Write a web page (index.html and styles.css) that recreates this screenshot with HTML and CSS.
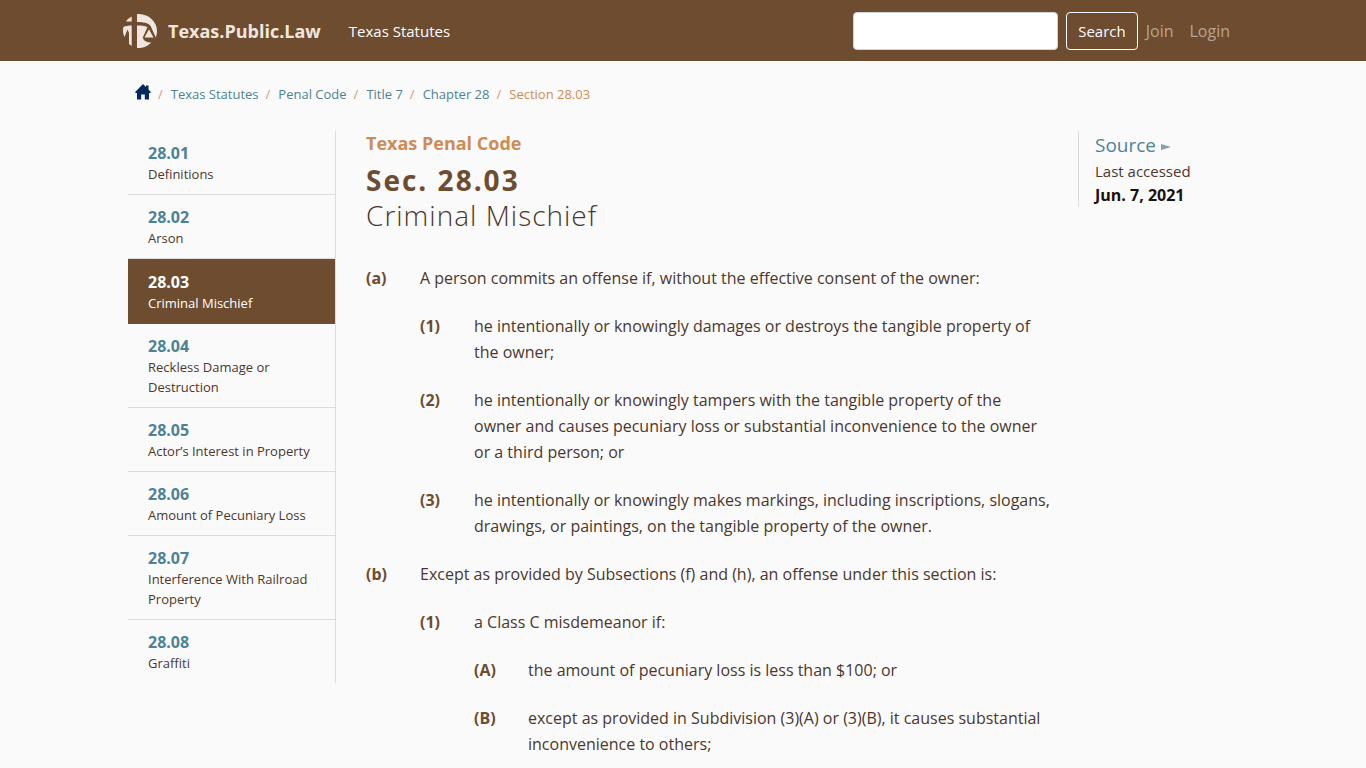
FILE: index.html
```html
<!DOCTYPE html>
<html lang="en">

<head>
  <meta charset="UTF-8">
  <title>Texas Penal Code Section 28.03 - Criminal Mischief</title>
  <meta name="viewport" content="width=device-width, initial-scale=1.0">
  <link rel="stylesheet" href="styles.css">
</head>

<body>

  <!-- Navbar -->
  <header class="navbar">
    <div class="container navbar-inner">
      <a class="brand" href="#">
        <svg class="brand-logo" viewBox="0 0 34 34" aria-hidden="true">
          <path d="M8.700 2.500V7.600H2.800A17 17 0 0 1 8.700 2.500Z" />
          <path d="M14 0C25 -.500 34 7 34 17C34 19.500 33.500 21.500 32.800 23.500L28.500 14C27.500 10 23 8 14 8Z" />
          <path d="M.3 13C3 12 5.500 11.500 8.700 11.500V32L6 30V19L4.500 15.500L1.500 23C0 20 -.300 16.500 .3 13Z" />
          <path d="M14 11.500C18 11.500 21.500 11.800 24.500 13L19.800 23.500C20 26.500 24 28.500 28.500 28.500C24 33 19 34.500 14 33.900Z" />
          <path d="M26 15.300L30.500 23.500H21.500Z" />
        </svg>
        <span>Texas.Public.Law</span>
      </a>
      <nav class="nav-main">
        <a href="#">Texas Statutes</a>
      </nav>
      <form class="search">
        <input type="search" name="term" aria-label="Search">
        <button type="submit">Search</button>
      </form>
      <nav class="nav-user">
        <a href="#">Join</a>
        <a href="#">Login</a>
      </nav>
    </div>
  </header>

  <div class="container">

    <!-- Breadcrumbs -->
    <ol class="breadcrumb">
      <li>
        <a href="#" aria-label="Home">
          <svg class="home-icon" viewBox="0 0 16 16" aria-hidden="true">
            <path d="M8 0L11 3V1.500H13.500V5.500L16 8.200L15.300 9H14V15.500H9.800V10.500H6.200V15.500H2V9H.7L0 8.200Z" />
          </svg>
        </a>
      </li>
      <li><a href="#">Texas Statutes</a></li>
      <li><a href="#">Penal Code</a></li>
      <li><a href="#">Title 7</a></li>
      <li><a href="#">Chapter 28</a></li>
      <li class="active">Section 28.03</li>
    </ol>

    <div class="layout">

      <!-- Sibling sections -->
      <nav class="siblings">
        <a href="#"><b>28.01</b><span>Definitions</span></a>
        <a href="#"><b>28.02</b><span>Arson</span></a>
        <a href="#" class="active"><b>28.03</b><span>Criminal Mischief</span></a>
        <a href="#"><b>28.04</b><span>Reckless Damage or Destruction</span></a>
        <a href="#"><b>28.05</b><span>Actor’s Interest in Property</span></a>
        <a href="#"><b>28.06</b><span>Amount of Pecuniary Loss</span></a>
        <a href="#"><b>28.07</b><span>Interference With Railroad Property</span></a>
        <a href="#"><b>28.08</b><span>Graffiti</span></a>
      </nav>

      <!-- Statute text -->
      <main class="statute">
        <div class="code-name">Texas Penal Code</div>
        <h1>
          <span class="number">Sec. 28.03</span>
          <span class="name">Criminal Mischief</span>
        </h1>

        <div class="leaf-list">
          <section>
            <b>(a)</b>
            <p>A person commits an offense if, without the effective consent of the owner:</p>
          </section>
          <section class="level-1">
            <b>(1)</b>
            <p>he intentionally or knowingly damages or destroys the tangible property of the owner;</p>
          </section>
          <section class="level-1">
            <b>(2)</b>
            <p>he intentionally or knowingly tampers with the tangible property of the owner and causes pecuniary loss or substantial inconvenience to the owner or a third person; or</p>
          </section>
          <section class="level-1">
            <b>(3)</b>
            <p>he intentionally or knowingly makes markings, including inscriptions, slogans, drawings, or paintings, on the tangible property of the owner.</p>
          </section>
          <section>
            <b>(b)</b>
            <p>Except as provided by Subsections (f) and (h), an offense under this section is:</p>
          </section>
          <section class="level-1">
            <b>(1)</b>
            <p>a Class C misdemeanor if:</p>
          </section>
          <section class="level-2">
            <b>(A)</b>
            <p>the amount of pecuniary loss is less than $100; or</p>
          </section>
          <section class="level-2">
            <b>(B)</b>
            <p>except as provided in Subdivision (3)(A) or (3)(B), it causes substantial inconvenience to others;</p>
          </section>
        </div>
      </main>

      <!-- Source -->
      <aside class="source">
        <a href="#">Source <svg viewBox="0 0 10 6" aria-hidden="true"><path d="M0 0L10 3L0 6Z" /></svg></a>
        <div>Last accessed</div>
        <strong>Jun. 7, 2021</strong>
      </aside>

    </div>
  </div>

</body>

</html>
```
FILE: styles.css
```css
* {
  box-sizing: border-box;
}

body {
  margin: 0;
  background-color: #fafafa;
  color: #4c372c;
  font-family: "Segoe UI", "Open Sans", "Noto Sans", sans-serif;
  font-size: 16px;
  line-height: 24px;
}

a {
  color: #4d8295;
  text-decoration: none;
}

.container {
  max-width: 1140px;
  margin: 0 auto;
  padding: 0 15px;
}

/* Navbar */
.navbar {
  background-color: #6d4c2f;
}

.navbar-inner {
  display: flex;
  align-items: center;
  height: 61px;
  padding: 0 23px 0 10px;
}

.navbar a {
  color: #fff;
}

.navbar .brand {
  display: flex;
  align-items: center;
  gap: 11px;
  margin-right: 28px;
  color: #f0e6de;
  font-size: 18px;
  font-weight: 700;
}

.brand-logo {
  width: 34px;
  height: 34px;
  fill: #f0e6de;
}

.nav-main {
  flex: 1;
  font-size: 15px;
}

.search {
  display: flex;
  gap: 8px;
}

.search input {
  width: 205px;
  height: 38px;
  padding: 6px 12px;
  border: 1px solid #ced4da;
  border-radius: 4px;
  background-color: #fff;
  font: inherit;
}

.search button {
  height: 38px;
  padding: 0 11px;
  border: 1px solid #fff;
  border-radius: 4px;
  background-color: transparent;
  color: #fff;
  font: inherit;
  font-size: 15px;
}

.nav-user {
  display: flex;
  gap: 16px;
  margin-left: 8px;
}

.navbar .nav-user a {
  color: #b6a597;
}

/* Breadcrumbs */
.breadcrumb {
  display: flex;
  margin: 0;
  padding: 23px 7px 27px;
  list-style: none;
  font-size: 13px;
  line-height: 20px;
}

.breadcrumb li + li::before {
  content: "/";
  padding: 0 8px 0 7px;
  color: #d9957a;
}

.breadcrumb .active {
  color: #cd8c55;
}

.home-icon {
  display: block;
  width: 16px;
  height: 16px;
  fill: #00295c;
}

/* Columns */
.layout {
  display: grid;
  grid-template-columns: 208px minmax(0, 1fr) 160px;
  align-items: start;
}

/* Sibling sections */
.siblings {
  border-right: 1px solid #dcdcdc;
}

.siblings a {
  display: block;
  padding: 11px 20px 10px;
  border-bottom: 1px solid #dcdcdc;
  color: #4c372c;
  font-size: 13px;
  line-height: 20px;
}

.siblings a:last-child {
  border-bottom: 0;
}

.siblings b {
  display: block;
  color: #4d8295;
  font-size: 16px;
  line-height: 22px;
}

.siblings span {
  display: block;
}

.siblings .active {
  border: solid #6d4c2f;
  border-width: 1px 0;
  background-color: #6d4c2f;
  color: #fff;
}

.siblings .active b {
  color: #fff;
}

/* Statute text */
.statute {
  padding: 0 27px 0 30px;
}

.code-name {
  color: #cd8c55;
  font-size: 18px;
  font-weight: 700;
}

h1 {
  margin: 8px 0 32px;
  font-size: 28px;
  line-height: 35px;
  letter-spacing: 1px;
}

h1 span {
  display: block;
}

h1 .number {
  color: #6d4c2f;
  font-weight: 700;
  letter-spacing: 2px;
}

h1 .name {
  font-weight: 300;
}

.leaf-list section {
  display: flex;
  margin-bottom: 22px;
  line-height: 26px;
}

.leaf-list section:last-child {
  margin-bottom: 0;
}

.leaf-list b {
  flex: 0 0 54px;
  color: #6d4c2f;
}

.leaf-list p {
  margin: 0;
}

.leaf-list .level-1 {
  margin-left: 54px;
}

.leaf-list .level-2 {
  margin-left: 108px;
}

/* Source */
.source {
  padding-left: 16px;
  border-left: 1px solid #dcdcdc;
  font-size: 15px;
}

.source a {
  display: block;
  font-size: 19px;
  font-weight: 500;
  line-height: 28px;
}

.source svg {
  width: 10px;
  height: 6px;
  fill: #7fa3b1;
  vertical-align: middle;
}

.source strong {
  color: #1c100b;
  font-size: 16px;
}
```
